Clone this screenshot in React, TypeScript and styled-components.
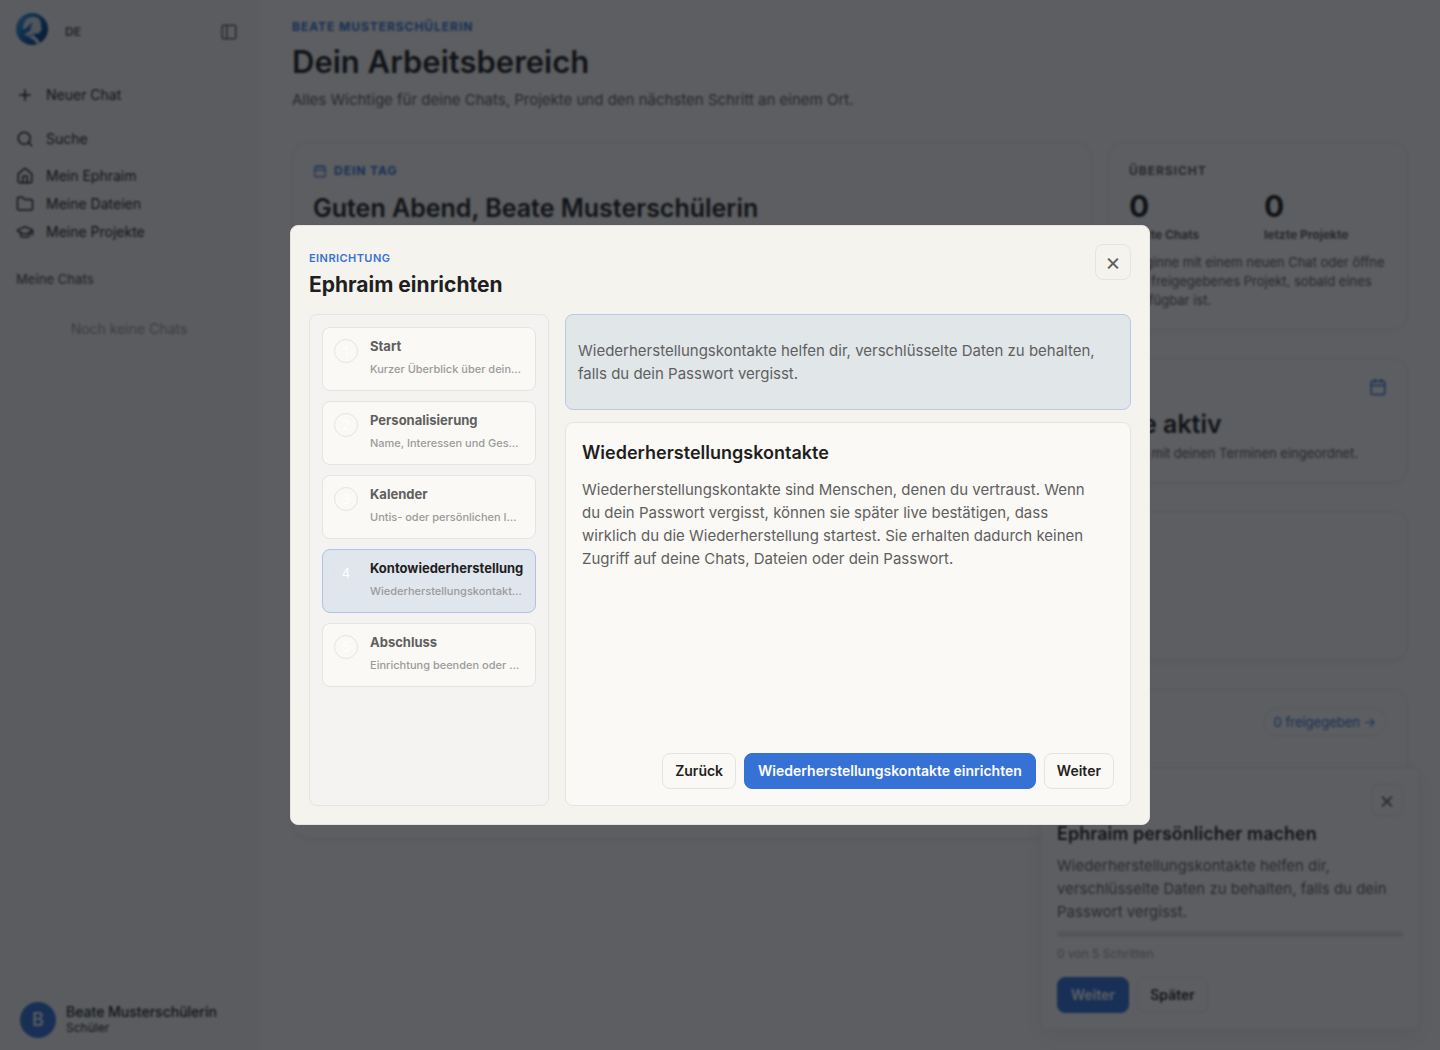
import React from "react";
import styled, { createGlobalStyle, css } from "styled-components";
import { Plus, Search, House, Folder, GraduationCap, PanelLeft, Calendar } from "lucide-react";

const color = {
  page: "#faf9f5",
  sidebar: "#f5f4f0",
  dialog: "#f4f3ed",
  muted: "#f4f3f2",
  line: "#e4e4e4",
  text: "#1f1f1f",
  soft: "#5f5f5f",
  faint: "#9b9b9b",
  accent: "#3672d5",
};

const GlobalStyle = createGlobalStyle`
  *, *::before, *::after { box-sizing: border-box; }
  body {
    margin: 0;
    background: ${color.page};
    color: ${color.text};
    font-family: Inter, "Liberation Sans", sans-serif;
    font-size: 14px;
    line-height: 20px;
    overflow: hidden;
  }
  h1, h2, h3, p, ul, ol { margin: 0; padding: 0; }
  ul, ol { list-style: none; }
  button { font: inherit; color: inherit; cursor: pointer; }
  a { color: inherit; text-decoration: none; }
`;

const Shell = styled.div`
  display: grid;
  grid-template-columns: 260px minmax(0, 1fr);
  height: 100vh;
`;

const Sidebar = styled.aside`
  display: flex;
  flex-direction: column;
  padding: 13px 16px 12px;
  background: ${color.sidebar};
`;

const SidebarTop = styled.div`
  display: flex;
  align-items: center;
  gap: 17px;
  height: 38px;
  margin-bottom: 30px;

  > svg { align-self: flex-start; }
`;

const Language = styled.button`
  padding: 0;
  border: 0;
  background: none;
  color: ${color.soft};
  font-size: 12px;
  font-weight: 700;
`;

const CollapseButton = styled.button`
  display: flex;
  margin-left: auto;
  padding: 6px;
  border: 0;
  background: none;
  color: ${color.soft};
`;

const NavGroup = styled.ul<{ $gap: number }>`
  display: flex;
  flex-direction: column;
  gap: ${(p) => p.$gap}px;
  margin-bottom: 9px;
`;

const NavLink = styled.a`
  display: flex;
  align-items: center;
  gap: 12px;
  height: 28px;
`;

const SidebarLabel = styled.h2`
  margin-top: 14px;
  color: ${color.soft};
  font-size: 13px;
  font-weight: 500;
  line-height: 20px;
`;

const EmptyChats = styled.p`
  margin-top: 30px;
  margin-right: 2px;
  color: ${color.faint};
  text-align: center;
`;

const User = styled.div`
  display: flex;
  align-items: center;
  gap: 10px;
  margin-top: auto;
  padding-left: 4px;
  font-weight: 500;
  line-height: 16px;
`;

const Avatar = styled.span`
  display: grid;
  place-items: center;
  width: 36px;
  height: 36px;
  border-radius: 50%;
  background: ${color.accent};
  color: ${color.page};
  font-size: 18px;
`;

const Role = styled.div`
  font-size: 12px;
  font-weight: 400;
`;

const Main = styled.main`
  display: flex;
  flex-direction: column;
  padding: 17px 32px;
`;

const Eyebrow = styled.p<{ $neutral?: boolean; $small?: boolean }>`
  display: flex;
  align-items: center;
  gap: 7px;
  color: ${(p) => (p.$neutral ? color.soft : color.accent)};
  font-size: ${(p) => (p.$small ? 11 : 12)}px;
  font-weight: ${(p) => (p.$small ? 600 : 700)};
  letter-spacing: ${(p) => (p.$small ? "0.04em" : "0.08em")};
  line-height: 20px;
  text-transform: uppercase;
`;

const PageTitle = styled.h1`
  margin-top: 5px;
  font-size: 31px;
  font-weight: 600;
  line-height: 40px;
`;

const Lead = styled.p`
  margin-top: 8px;
  margin-bottom: 32px;
  color: ${color.soft};
  font-size: 15px;
  line-height: 20px;
`;

const Rows = styled.div`
  display: flex;
  flex-direction: column;
  gap: 28px;
`;

const CardRow = styled.div<{ $columns: string }>`
  display: grid;
  grid-template-columns: ${(p) => p.$columns};
  gap: 16px;
`;

const Card = styled.section<{ $minHeight?: number }>`
  min-height: ${(p) => p.$minHeight ?? 0}px;
  padding: 18px 20px;
  border: 1px solid ${color.line};
  border-radius: 16px;
  background: ${color.page};
  box-shadow: 0 2px 8px rgba(0, 0, 0, 0.03);
`;

const CardTitle = styled.h2`
  margin-top: 11px;
  font-size: 25px;
  font-weight: 600;
  line-height: 32px;
`;

const CardHead = styled.div`
  display: flex;
  align-items: center;
  justify-content: flex-end;
  min-height: 20px;
  color: ${color.accent};
`;

const CardText = styled.p`
  margin-top: 4px;
  color: ${color.soft};
  font-size: 13px;
  line-height: 19px;
`;

const Stats = styled.div`
  display: grid;
  grid-template-columns: 1fr 1fr;
  gap: 12px;
  margin-top: 7px;
  margin-bottom: 8px;
`;

const StatValue = styled.div`
  font-size: 30px;
  font-weight: 700;
  line-height: 36px;
`;

const StatLabel = styled.div`
  margin-top: 1px;
  color: ${color.soft};
  font-size: 12px;
  font-weight: 700;
  line-height: 20px;
`;

const Pill = styled.a`
  padding: 3px 10px;
  border: 1px solid ${color.line};
  border-radius: 14px;
  font-size: 13px;
  line-height: 20px;
`;

const Button = styled.button<{ $primary?: boolean }>`
  height: 36px;
  padding: 0 12px;
  border: 1px solid ${color.line};
  border-radius: 8px;
  background: transparent;
  font-size: 14px;
  font-weight: 600;
  ${(p) =>
    p.$primary &&
    css`
      padding: 0 13px;
      border-color: ${color.accent};
      background: ${color.accent};
      color: #ffffff;
    `}
`;

const CloseButton = styled.button<{ $size: number }>`
  display: grid;
  flex: none;
  place-items: center;
  width: ${(p) => p.$size}px;
  height: ${(p) => p.$size}px;
  padding: 0;
  border: 1px solid ${color.line};
  border-radius: 8px;
  background: transparent;
  color: ${color.soft};
  font-size: 24px;
  line-height: 24px;
`;

const BodyText = styled.p`
  max-width: 520px;
  color: ${color.soft};
  font-size: 15px;
  line-height: 23px;
`;

const SectionTitle = styled.h3`
  font-size: 18px;
  font-weight: 600;
  line-height: 26px;
`;

const Hint = styled.section`
  position: fixed;
  right: 20px;
  bottom: 20px;
  display: flex;
  flex-direction: column;
  width: 380px;
  padding: 16px;
  border: 1px solid ${color.line};
  border-radius: 8px;
  background: ${color.page};
  box-shadow: 0 8px 24px rgba(0, 0, 0, 0.06);

  ${SectionTitle} { margin: 5px 0 7px; }
`;

const HintHead = styled.div`
  display: flex;
  justify-content: flex-end;
`;

const Track = styled.div`
  height: 6px;
  margin-top: 8px;
  border-radius: 3px;
  background: #e0e0e0;
`;

const HintMeta = styled.p`
  margin: 8px 0 14px;
  color: ${color.faint};
  font-size: 12px;
  line-height: 18px;
`;

const ButtonRow = styled.div<{ $end?: boolean }>`
  display: flex;
  gap: 8px;
  justify-content: ${(p) => (p.$end ? "flex-end" : "flex-start")};
  margin-top: auto;
`;

const Backdrop = styled.div`
  position: fixed;
  inset: 0;
  display: grid;
  place-items: center;
  background: rgba(10, 13, 19, 0.66);
  backdrop-filter: blur(1px);
`;

const Dialog = styled.div`
  display: flex;
  flex-direction: column;
  gap: 16px;
  width: min(860px, calc(100vw - 32px));
  height: min(600px, calc(100vh - 32px));
  padding: 18px;
  border: 1px solid ${color.line};
  border-radius: 8px;
  background: ${color.dialog};
`;

const DialogHead = styled.header`
  display: flex;
  align-items: flex-start;
  justify-content: space-between;
  height: 54px;
`;

const DialogHeading = styled.div`
  padding-top: 4px;
`;

const DialogTitle = styled.h2`
  margin-top: 3px;
  font-size: 21px;
  font-weight: 700;
  line-height: 28px;
`;

const DialogBody = styled.div`
  display: grid;
  flex: 1;
  grid-template-columns: 240px minmax(0, 1fr);
  gap: 16px;
  min-height: 0;
`;

const Steps = styled.ol`
  display: flex;
  flex-direction: column;
  gap: 10px;
  padding: 12px;
  border: 1px solid ${color.line};
  border-radius: 8px;
  background: ${color.muted};
`;

const StepTitle = styled.span`
  display: block;
  color: ${color.soft};
  font-size: 13px;
  font-weight: 700;
  line-height: 18px;
`;

const StepText = styled.span`
  display: block;
  overflow: hidden;
  margin-top: 5px;
  color: ${color.faint};
  font-size: 11px;
  font-weight: 500;
  line-height: 18px;
  text-overflow: ellipsis;
  white-space: nowrap;
`;

const StepButton = styled.button<{ $active?: boolean }>`
  display: grid;
  grid-template-columns: 24px minmax(0, 1fr);
  gap: 12px;
  align-items: start;
  width: 100%;
  height: 64px;
  padding: 9px 11px;
  border: 1px solid ${(p) => (p.$active ? "#aec3e6" : color.line)};
  border-radius: 8px;
  background: ${(p) => (p.$active ? "#e0e6ee" : color.page)};
  text-align: left;

  ${StepTitle} { color: ${(p) => (p.$active ? color.text : color.soft)}; }
`;

const StepNumber = styled.span`
  display: grid;
  place-items: center;
  width: 24px;
  height: 24px;
  margin-top: 2px;
  border: 1px solid ${color.line};
  border-radius: 50%;
  color: #ffffff;
  font-size: 13px;
  line-height: 22px;
`;

const Content = styled.div`
  display: flex;
  flex-direction: column;
  gap: 12px;
`;

const Notice = styled.div`
  padding: 24px 12px;
  border: 1px solid #b9cae5;
  border-radius: 8px;
  background: #e1e6e9;
`;

const Panel = styled.section`
  display: flex;
  flex: 1;
  flex-direction: column;
  gap: 12px;
  padding: 17px 16px 16px;
  border: 1px solid ${color.line};
  border-radius: 8px;
  background: ${color.page};
`;

const Logo = () => (
  <svg width="32" height="32" viewBox="0 0 32 32" role="img" aria-label="Ephraim">
    <defs>
      <linearGradient id="logo" x1="0" y1="0" x2="1" y2="0.6">
        <stop offset="0" stopColor="#36b3f0" />
        <stop offset="0.5" stopColor="#1769b5" />
        <stop offset="1" stopColor="#053c7c" />
      </linearGradient>
    </defs>
    <circle cx="16" cy="16" r="16" fill="url(#logo)" />
    <path d="M8 11c1-6 8-9 14-6 3 2 3 6 3 9l1 3-2 1c0 3-2 3-5 2l-1 3 4 3 2 4-3 1c-4-6-9-7-14-9l2-3c-2-2-3-5-1-8z" fill="#d5e0e8" />
    <path d="M5 17l4-1 8-7-3 7 2 0-4 3-3 2-3 3 1-4z" fill="#1769b5" />
    <path d="M8 22c4 2 8 1 10-2" fill="none" stroke="#1769b5" strokeWidth="1" />
  </svg>
);

const places = [
  { label: "Mein Ephraim", Icon: House },
  { label: "Meine Dateien", Icon: Folder },
  { label: "Meine Projekte", Icon: GraduationCap },
];

const steps = [
  { title: "Start", text: "Kurzer Überblick über deine Einrichtung" },
  { title: "Personalisierung", text: "Name, Interessen und Gesprächsstil" },
  { title: "Kalender", text: "Untis- oder persönlichen Import verbinden" },
  { title: "Kontowiederherstellung", text: "Wiederherstellungskontakte einrichten", active: true },
  { title: "Abschluss", text: "Einrichtung beenden oder später fortsetzen" },
];

const recoveryHint =
  "Wiederherstellungskontakte helfen dir, verschlüsselte Daten zu behalten, falls du dein Passwort vergisst.";

export default function App() {
  return (
    <>
      <GlobalStyle />
      <Shell>
        <Sidebar>
          <SidebarTop>
            <Logo />
            <Language>DE</Language>
            <CollapseButton aria-label="Seitenleiste einklappen">
              <PanelLeft size={18} />
            </CollapseButton>
          </SidebarTop>
          <NavGroup $gap={16}>
            <li><NavLink href="#neu"><Plus size={18} />Neuer Chat</NavLink></li>
            <li><NavLink href="#suche"><Search size={18} />Suche</NavLink></li>
          </NavGroup>
          <NavGroup $gap={0}>
            {places.map(({ label, Icon }) => (
              <li key={label}><NavLink href="#bereich"><Icon size={18} />{label}</NavLink></li>
            ))}
          </NavGroup>
          <SidebarLabel>Meine Chats</SidebarLabel>
          <EmptyChats>Noch keine Chats</EmptyChats>
          <User>
            <Avatar>B</Avatar>
            <div>
              Beate Musterschülerin
              <Role>Schüler</Role>
            </div>
          </User>
        </Sidebar>

        <Main>
          <Eyebrow>Beate Musterschülerin</Eyebrow>
          <PageTitle>Dein Arbeitsbereich</PageTitle>
          <Lead>Alles Wichtige für deine Chats, Projekte und den nächsten Schritt an einem Ort.</Lead>
          <Rows>
            <CardRow $columns="minmax(0, 1fr) 300px">
              <Card $minHeight={188}>
                <Eyebrow><Calendar size={14} />Dein Tag</Eyebrow>
                <CardTitle>Guten Abend, Beate Musterschülerin</CardTitle>
              </Card>
              <Card>
                <Eyebrow $neutral>Übersicht</Eyebrow>
                <Stats>
                  <div><StatValue>0</StatValue><StatLabel>letzte Chats</StatLabel></div>
                  <div><StatValue>0</StatValue><StatLabel>letzte Projekte</StatLabel></div>
                </Stats>
                <CardText>Beginne mit einem neuen Chat oder öffne ein freigegebenes Projekt, sobald eines verfügbar ist.</CardText>
              </Card>
            </CardRow>
            <CardRow $columns="minmax(0, 1fr) minmax(0, 1fr)">
              <Card />
              <Card $minHeight={125}>
                <CardHead><Calendar size={18} /></CardHead>
                <CardTitle>Deine Kalendertermine aktiv</CardTitle>
                <CardText>Aufgaben und Projekte werden automatisch mit deinen Terminen eingeordnet.</CardText>
              </Card>
            </CardRow>
            <Card $minHeight={150} />
            <Card $minHeight={150}>
              <CardHead><Pill href="#projekte">0 freigegeben →</Pill></CardHead>
            </Card>
          </Rows>
        </Main>
      </Shell>

      <Hint>
        <HintHead>
          <CloseButton $size={32} aria-label="Hinweis schließen">×</CloseButton>
        </HintHead>
        <SectionTitle>Ephraim persönlicher machen</SectionTitle>
        <BodyText>{recoveryHint}</BodyText>
        <Track />
        <HintMeta>0 von 5 Schritten</HintMeta>
        <ButtonRow>
          <Button $primary>Weiter</Button>
          <Button>Später</Button>
        </ButtonRow>
      </Hint>

      <Backdrop>
        <Dialog role="dialog" aria-modal="true" aria-labelledby="dialog-title">
          <DialogHead>
            <DialogHeading>
              <Eyebrow $small>Einrichtung</Eyebrow>
              <DialogTitle id="dialog-title">Ephraim einrichten</DialogTitle>
            </DialogHeading>
            <CloseButton $size={36} aria-label="Schließen">×</CloseButton>
          </DialogHead>
          <DialogBody>
            <Steps>
              {steps.map((step, index) => (
                <li key={step.title}>
                  <StepButton $active={step.active}>
                    <StepNumber>{index + 1}</StepNumber>
                    <span>
                      <StepTitle>{step.title}</StepTitle>
                      <StepText>{step.text}</StepText>
                    </span>
                  </StepButton>
                </li>
              ))}
            </Steps>
            <Content>
              <Notice><BodyText>{recoveryHint}</BodyText></Notice>
              <Panel>
                <SectionTitle>Wiederherstellungskontakte</SectionTitle>
                <BodyText>
                  Wiederherstellungskontakte sind Menschen, denen du vertraust. Wenn du dein Passwort vergisst,
                  können sie später live bestätigen, dass wirklich du die Wiederherstellung startest. Sie erhalten
                  dadurch keinen Zugriff auf deine Chats, Dateien oder dein Passwort.
                </BodyText>
                <ButtonRow $end>
                  <Button>Zurück</Button>
                  <Button $primary>Wiederherstellungskontakte einrichten</Button>
                  <Button>Weiter</Button>
                </ButtonRow>
              </Panel>
            </Content>
          </DialogBody>
        </Dialog>
      </Backdrop>
    </>
  );
}
